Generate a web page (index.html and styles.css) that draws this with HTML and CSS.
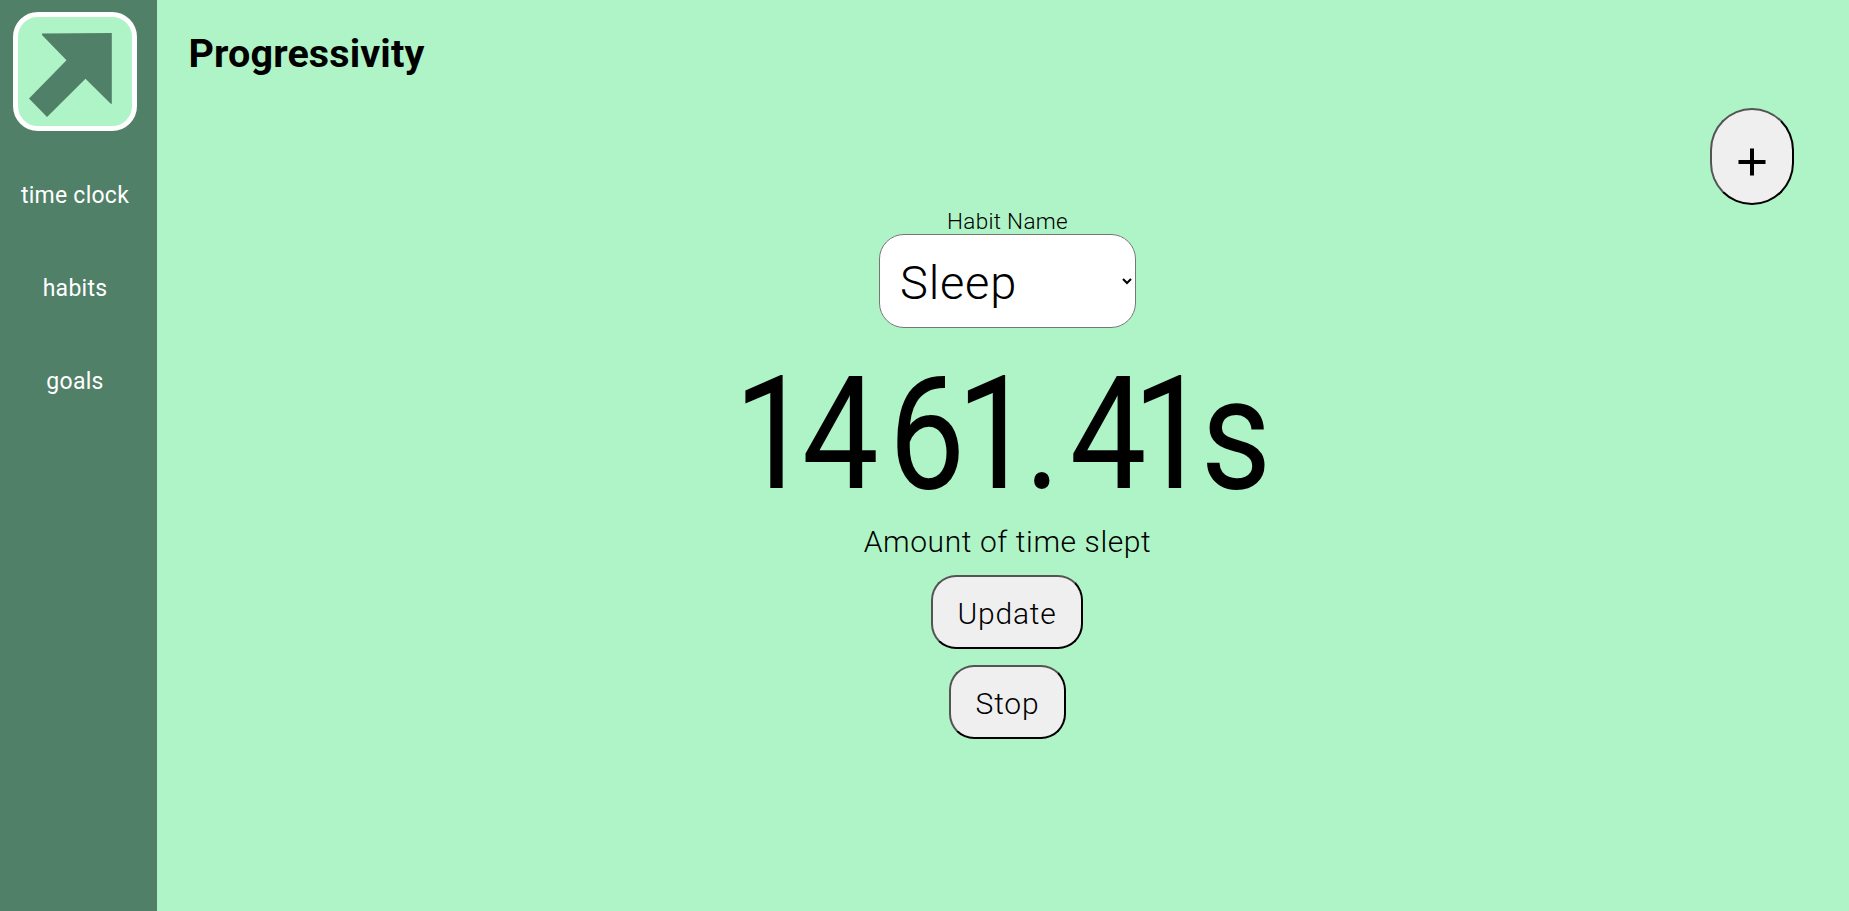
FILE: index.html
```html
<!DOCTYPE html>
<html lang="en">
<head>
<meta charset="utf-8">
<title>Progressivity</title>
<link rel="stylesheet" href="styles.css">
</head>
<body>
<nav class="sidebar">
  <a class="logo">
    <svg viewBox="0 0 124 119" width="124" height="119" aria-hidden="true">
      <rect x="2.5" y="2.5" width="119" height="114" rx="22.5" class="logo-box"/>
      <path class="logo-arrow" d="M29 21.5L98.8 21V92L97.5 91.5L72.5 66.8L34 105L16 86.5L53.5 48.3L29 23Z"/>
    </svg>
  </a>
  <a class="link link-clock">time clock</a>
  <a class="link link-habits">habits</a>
  <a class="link link-goals">goals</a>
</nav>
<main class="page">
  <header class="header"><h1 class="title">Progressivity</h1></header>
  <div class="toolbar">
    <button class="add" aria-label="Add"><svg width="28" height="28" viewBox="0 0 28 28"><path d="M0.5 14H27.5M14 0.5V27.5" stroke="#000" stroke-width="4"/></svg></button>
  </div>
  <section class="timer">
    <label class="label" for="habit">Habit Name</label>
    <select class="habit" id="habit"><option>Sleep</option></select>
    <div class="time"><span class="digits"><span class="tight">1</span><span class="wide">4</span><span class="tight">61</span><span class="point">.</span><span class="close">4</span><span class="tight">1</span>s</span></div>
    <p class="caption">Amount of time slept</p>
    <button class="btn update">Update</button>
    <button class="btn stop">Stop</button>
  </section>
</main>
</body>
</html>
```
FILE: styles.css
```css
* { box-sizing: border-box; }
body {
  margin: 0;
  height: 911px;
  display: flex;
  overflow: hidden;
  background: #aff4c6;
  color: #000;
  font-family: Roboto, "Liberation Sans", sans-serif;
}
.sidebar {
  width: 157px;
  height: 911px;
  flex: none;
  padding: 12px 7px 0 0;
  background: #508068;
  display: flex;
  flex-direction: column;
  align-items: center;
}
.logo { height: 119px; margin: 0 0 49px; }
.logo svg { display: block; }
.logo-box { fill: #aff4c6; stroke: #fff; stroke-width: 5; }
.logo-arrow { fill: #508068; }
.link {
  height: 32px;
  margin-bottom: 61px;
  line-height: 32px;
  font-size: 23px;
  letter-spacing: .25px;
  color: #fff;
  white-space: nowrap;
}
.page { flex: 1; }
.header { height: 108px; padding: 29px 0 0 31.5px; }
.title { margin: 0; font-size: 39.5px; line-height: 50px; font-weight: 700; letter-spacing: .12px; width: max-content; }
.toolbar { height: 97px; display: flex; justify-content: flex-end; padding-right: 55px; }
.add {
  width: 84px;
  height: 97px;
  padding: 10px 0 0;
  border: 2px outset #000;
  border-radius: 42px;
  background: #efefef;
  display: flex;
  align-items: center;
  justify-content: center;
}
.timer {
  padding: 5px 0 0 9px;
  display: flex;
  flex-direction: column;
  align-items: center;
}
.label { height: 23px; line-height: 23px; margin-bottom: 1px; font-size: 22.5px; font-weight: 300; letter-spacing: .3px; }
.habit {
  width: 257px;
  height: 94px;
  padding: 3px 0 0 16px;
  border: 1px solid #767676;
  border-radius: 25px;
  background: #fff;
  color: #000;
  font: 300 47px Roboto, sans-serif;
  letter-spacing: .8px;
}
.time { width: 546.5px; height: 180px; margin-top: 12px; line-height: 188px; font-size: 157px; display: flex; }
.digits { display: block; flex: none; transform: scaleX(.87); transform-origin: left; }
.tight { letter-spacing: -10px; }
.wide { letter-spacing: 11px; }
.point { letter-spacing: 10.5px; }
.close { letter-spacing: -16px; }
.caption { margin: 0; height: 44px; line-height: 44px; font-size: 30px; font-weight: 300; letter-spacing: .6px; }
.btn {
  height: 74px;
  padding: 3px 0 0;
  border: 2px outset #000;
  border-radius: 25px;
  background: #efefef;
  color: #000;
  font: 300 30px Roboto, sans-serif;
  letter-spacing: .8px;
}
.update { width: 152px; margin: 11px 1px 16px 0; }
.stop { width: 117px; }
```
